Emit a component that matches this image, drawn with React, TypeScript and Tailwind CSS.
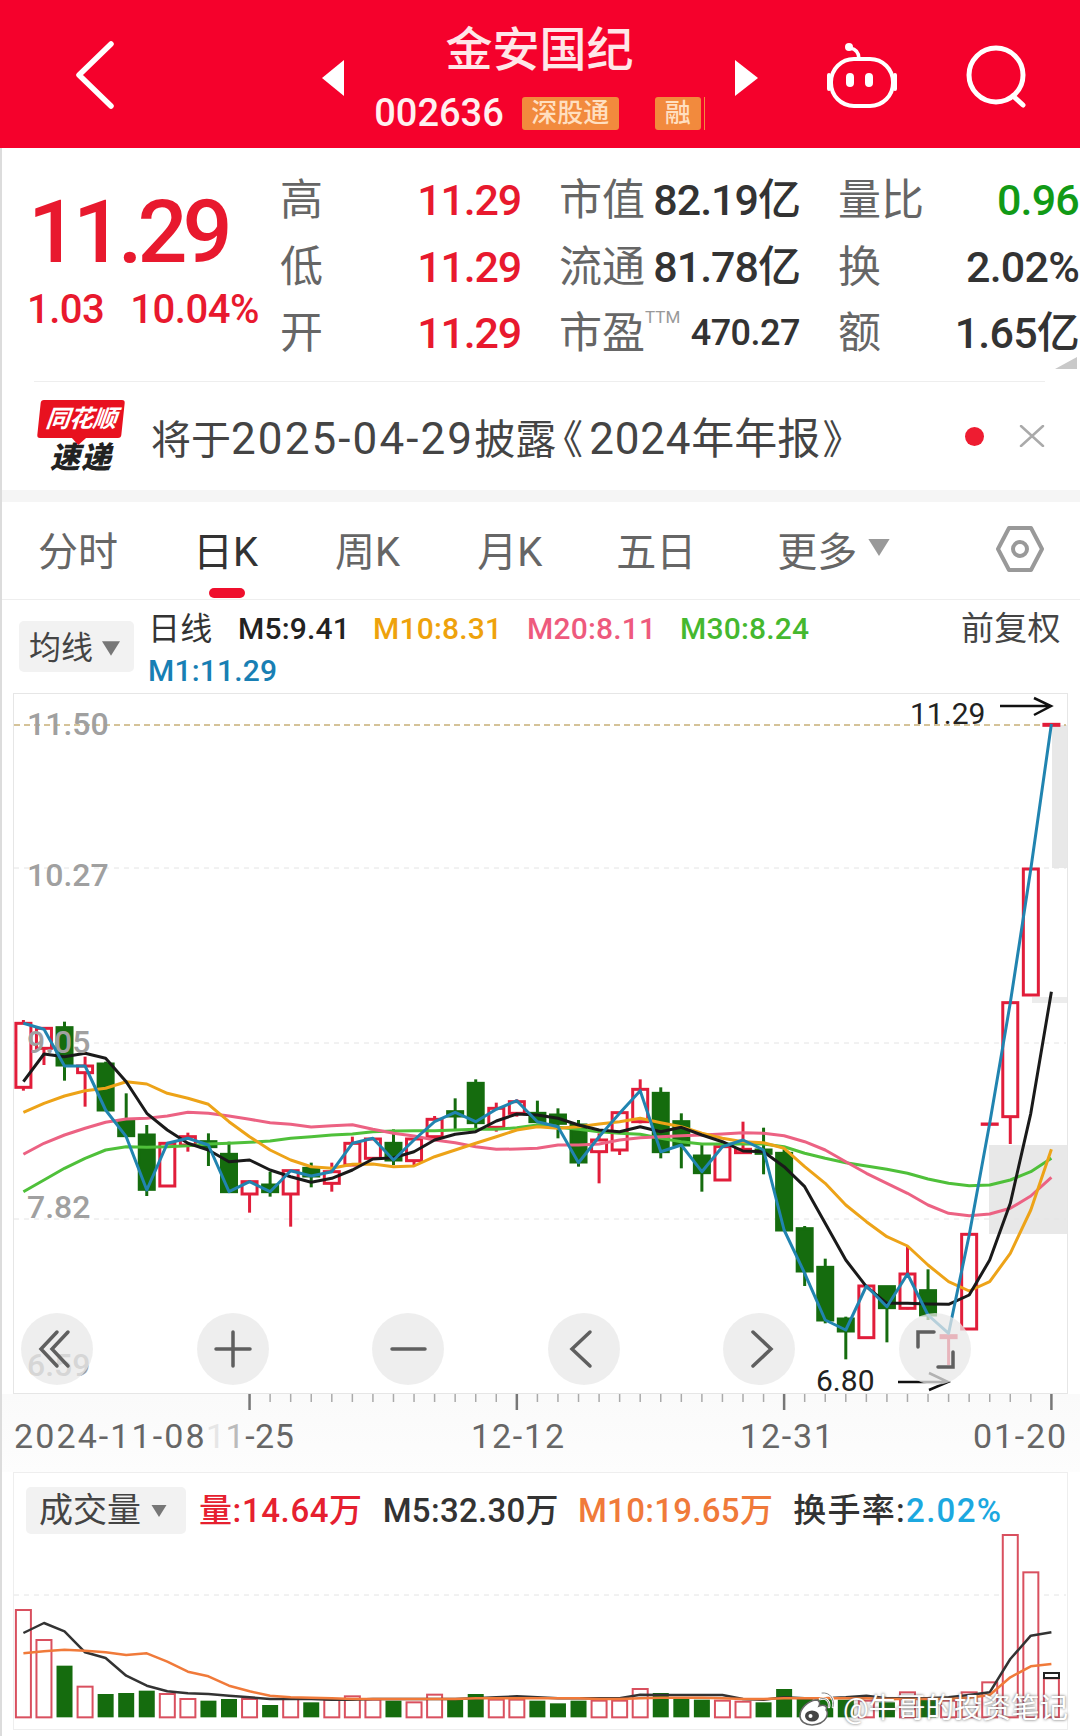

const CJK = "[font-family:Roboto,'Noto_Sans_CJK_SC',sans-serif]";

// zoomed-crop readings: x spacing per bar, y = 990 + v / 3 for the price chart
const barX = (i: number) => 23.4 + 20.56 * i;
const priceY = (v: number) => 990 + v / 3;
const volY = (v: number) => 1470 + v / 3;

type Candle = [number, number, number, number, number];
// up(1)/down(0), body top, body bottom, wick top, wick bottom
const CANDLES: Candle[] = [
  [1, 100, 292, 90, 302], [1, 115, 175, 115, 225], [0, 113, 225, 95, 272], [1, 228, 248, 200, 350],
  [0, 222, 360, 215, 360], [0, 392, 437, 310, 437], [0, 435, 598, 405, 618], [1, 460, 588, 460, 588],
  [1, 440, 465, 428, 485], [0, 455, 470, 430, 528], [0, 493, 605, 455, 605], [1, 575, 612, 570, 668],
  [0, 585, 605, 545, 620], [1, 542, 612, 540, 710], [0, 535, 558, 518, 592], [1, 545, 580, 518, 605],
  [1, 460, 525, 440, 525], [1, 447, 505, 447, 505], [0, 460, 510, 418, 525], [1, 447, 512, 447, 525],
  [1, 388, 440, 378, 450], [0, 365, 378, 325, 420], [0, 280, 398, 268, 415], [1, 355, 412, 338, 425],
  [1, 335, 370, 328, 380], [0, 370, 395, 332, 400],
  [0, 375, 400, 355, 445], [0, 405, 516, 390, 530], [1, 450, 485, 430, 580], [1, 368, 480, 368, 495],
  [1, 298, 395, 268, 400], [0, 310, 485, 292, 505], [0, 395, 465, 370, 535], [0, 498, 548, 465, 605],
  [1, 470, 570, 470, 570], [1, 478, 488, 395, 492], [0, 480, 490, 413, 553], [0, 490, 720, 478, 720],
  [0, 716, 843, 708, 888], [0, 832, 990, 806, 1000], [0, 987, 1023, 980, 1108], [1, 888, 1043, 888, 1043],
  [0, 890, 953, 890, 1057], [1, 852, 955, 770, 958], [0, 902, 975, 838, 990], [1, 1037, 1043, 1035, 1125],
  [1, 733, 1017, 733, 1017], [1, 402, 403, 402, 403], [1, 38, 380, 38, 462], [1, -363, 15, -363, 15],
  [1, -797, -794, -797, -794],
];

const M1 = [100, 118, 228, 228, 360, 440, 600, 460, 445, 465, 605, 575, 605, 542, 558, 545, 460, 445, 510, 450, 395, 367, 395, 358, 332, 395,
  410, 518, 440, 370, 302, 485, 465, 545, 470, 450, 480, 720, 850, 990, 1020, 888, 950, 852, 975, 1030, 735, 400, 38, -363, -798];
const M5 = [275, 192, 200, 190, 205, 275, 370, 420, 460, 480, 515, 510, 540, 560, 577, 565, 540, 507, 503, 485, 450, 433, 425, 393, 372, 375,
  385, 405, 420, 425, 410, 425, 412, 435, 455, 483, 485, 530, 590, 700, 810, 890, 940, 940, 942, 943, 915, 810, 640, 370, 5];
const M10 = [367, 340, 318, 302, 295, 275, 282, 310, 325, 343, 395, 440, 480, 510, 530, 535, 523, 522, 530, 528, 500, 480, 460, 440, 420, 410,
  415, 410, 402, 395, 385, 398, 410, 430, 445, 455, 458, 475, 530, 580, 645, 695, 740, 768, 825, 875, 903, 875, 790, 660, 478];
const M20 = [493, 460, 435, 415, 397, 387, 385, 378, 367, 370, 378, 388, 398, 403, 411, 407, 404, 418, 430, 438, 450, 458, 470, 478, 477, 475,
  465, 465, 462, 450, 443, 440, 437, 435, 432, 428, 430, 437, 455, 480, 515, 550, 580, 610, 645, 670, 677, 672, 655, 618, 562];
const M30 = [605, 570, 535, 505, 480, 470, 472, 470, 467, 462, 460, 457, 453, 445, 440, 435, 432, 425, 423, 422, 422, 420, 418, 418, 413, 405,
  412, 418, 425, 430, 433, 445, 455, 462, 462, 462, 462, 470, 490, 505, 518, 528, 538, 550, 567, 580, 587, 585, 570, 545, 505];

const VOL: [number, number][] = [
  [1, 423], [1, 513], [0, 590], [1, 653], [0, 675], [0, 672], [0, 665], [1, 675], [1, 690], [0, 695], [0, 690], [1, 690], [0, 708],
  [1, 690], [0, 700], [1, 692], [1, 682], [1, 692], [0, 695], [1, 700], [1, 677], [0, 692], [0, 675], [1, 692], [1, 692], [0, 695],
  [0, 703], [0, 695], [1, 695], [1, 695], [1, 660], [0, 672], [0, 690], [0, 692], [1, 695], [1, 698], [0, 700], [0, 660], [0, 690],
  [0, 690], [0, 692], [1, 695], [0, 700], [1, 670], [0, 690], [1, 695], [1, 670], [1, 640], [1, 198], [1, 310], [1, 628],
];
const VOL_M5 = [492, 462, 487, 550, 567, 620, 650, 667, 673, 675, 680, 685, 690, 690, 690, 692, 692, 690, 690, 690, 690, 690, 688, 685, 682, 685,
  688, 688, 688, 688, 677, 678, 678, 678, 678, 690, 692, 685, 688, 688, 685, 680, 688, 688, 688, 685, 678, 670, 570, 500, 490];
const VOL_M10 = [553, 547, 542, 545, 550, 558, 553, 578, 608, 622, 650, 667, 680, 685, 686, 688, 690, 690, 690, 690, 690, 690, 688, 688, 688, 688,
  688, 688, 690, 690, 688, 686, 686, 686, 688, 690, 690, 688, 688, 688, 688, 688, 690, 690, 690, 690, 686, 678, 625, 592, 585];

const toLine = (vals: number[], y: (v: number) => number) => vals.map((v, i) => `${barX(i).toFixed(1)},${y(v).toFixed(1)}`).join(' ');

const RED = '#e11d3a';
const GREEN = '#156c0e';

const Triangle = ({ className }: { className: string }) => (
  <svg viewBox="0 0 10 8" className={className}>
    <path d="M0 0H10L5 8Z" fill="currentColor" />
  </svg>
);

function Header() {
  return (
    <div className="flex h-[148px] bg-[#f5012c] pl-[76px] text-white">
      <svg viewBox="0 0 40 68" className="mt-[41px] h-[68px] w-[40px]" fill="none" stroke="#fff" strokeWidth="5.5" strokeLinecap="round" strokeLinejoin="round">
        <path d="M35 3 3 34 35 65" />
      </svg>
      <svg viewBox="0 0 22 36" className="ml-[206px] mt-[60px] h-[36px] w-[22px]">
        <path d="M22 0V36L0 18Z" fill="#fff" />
      </svg>
      <div className="flex w-[391px] flex-col items-center pt-[24px]">
        <div className="h-[52px] text-[47px] leading-[52px] font-medium text-[#ffe6e8]">金安国纪</div>
        <div className="mt-[20px] flex h-[34px] items-center">
          <span className="text-[38px] leading-none font-medium text-[#fff0f0]">002636</span>
          <span className="ml-[18px] flex h-[33px] w-[97px] items-center justify-center rounded-[3px] bg-[#f28a3d] text-[26px] font-medium text-[#ffdfc0]">深股通</span>
          <span className="ml-[36px] flex h-[33px] w-[46px] items-center justify-center rounded-[3px] bg-[#f28a3d] text-[26px] font-medium text-[#ffdfc0]">融</span>
          <span className="ml-[3px] h-[33px] w-[1px] bg-[#f28a3d]" />
        </div>
      </div>
      <svg viewBox="0 0 23 36" className="mt-[60px] h-[36px] w-[23px]">
        <path d="M0 0V36L23 18Z" fill="#fff" />
      </svg>
      <svg viewBox="0 0 72 68" className="ml-[68px] mt-[40px] h-[68px] w-[72px]" fill="none" stroke="#fff" strokeLinecap="round">
        <circle cx="23" cy="7" r="4" fill="#fff" stroke="none" />
        <path d="M24 8C30 9 33 12 33 19" strokeWidth="3.5" />
        <rect x="5" y="19" width="62" height="47" rx="23" strokeWidth="4" />
        <path d="M3 35V49M69 35V49" strokeWidth="4" />
        <path d="M24 37V43M43 37V43" strokeWidth="8" />
      </svg>
      <svg viewBox="0 0 64 64" className="ml-[66px] mt-[44px] h-[64px] w-[64px]" fill="none" stroke="#fff" strokeWidth="5" strokeLinecap="round">
        <circle cx="32" cy="31" r="27" />
        <path d="M49 52 59 61" />
      </svg>
    </div>
  );
}

const QUOTES = [
  { label: '高', midLabel: '市值', mid: '82.19亿', rightLabel: '量比', right: '0.96', rightColor: 'text-[#119a16]' },
  { label: '低', midLabel: '流通', mid: '81.78亿', rightLabel: '换', right: '2.02%', rightColor: 'text-[#333]' },
  { label: '开', midLabel: '市盈', mid: '470.27', rightLabel: '额', right: '1.65亿', rightColor: 'text-[#333]', ttm: true },
];

function QuotePanel() {
  return (
    <div className="relative flex h-[234px] pt-[19px]">
      <div className="w-[282px] pl-[28px] text-[#e8192e]">
        <div className="mt-[21px] text-[88px] leading-[88px] font-medium tracking-[-5px]">11.29</div>
        <div className="mt-[12px] ml-[-1px] flex text-[40px] leading-[44px] font-medium tracking-[-0.5px]">
          <span>1.03</span>
          <span className="ml-[26px]">10.04%</span>
        </div>
      </div>
      <div className="flex flex-col">
        {QUOTES.map((q) => (
          <div key={q.label} className="flex h-[66.5px] w-[800px] items-center text-[43px] text-[#666]">
            <span className="w-[43px]">{q.label}</span>
            <span className="w-[198px] text-right font-medium tracking-[-1.2px] text-[#e8192e]">11.29</span>
            <div className="ml-[38px] flex w-[241px] items-center justify-between">
              <span className="flex items-start">
                {q.midLabel}
                {q.ttm && <span className="mt-[6px] text-[17px] leading-[20px] text-[#999]">TTM</span>}
              </span>
              <span className={q.ttm ? 'text-[36px] font-medium tracking-[-0.5px] text-[#333]' : 'font-medium tracking-[-1px] text-[#333]'}>{q.mid}</span>
            </div>
            <div className="ml-[38px] flex w-[241px] items-center justify-between">
              <span>{q.rightLabel}</span>
              <span className={`font-medium tracking-[-0.8px] ${q.rightColor}`}>{q.right}</span>
            </div>
          </div>
        ))}
      </div>
      <svg viewBox="0 0 22 12" className="absolute right-[3px] bottom-[13px] h-[12px] w-[22px]">
        <path d="M22 0V12H0Z" fill="#c9c9c9" />
      </svg>
      <div className="absolute right-[35px] bottom-0 left-[34px] h-[1px] bg-[#eeeeee]" />
    </div>
  );
}

function NewsRow() {
  return (
    <div className="flex h-[108px] items-center pl-[38px]">
      <div className="flex w-[86px] flex-col items-center">
        <div className="relative flex h-[38px] w-[84px] skew-x-[-6deg] items-center justify-center rounded-[3px] bg-[#e8111f] text-[24px] leading-none font-bold tracking-[-0.5px] text-white italic">
          同花顺
          <span className="absolute bottom-[-5px] left-[37px] h-[10px] w-[10px] rotate-45 bg-[#e8111f]" />
        </div>
        <div className="mt-[5px] text-[30px] leading-[29px] font-black tracking-[1px] text-[#222] italic">速递</div>
      </div>
      <div className="mt-[6px] ml-[27px] flex items-baseline text-[40px] leading-none whitespace-nowrap text-[#444]">
        将于
        <span className="text-[44px] tracking-[2.1px]">2025-04-29</span>
        <span className="text-[41px]">披露</span>
        <span className="ml-[6px] mr-[7px] [font-feature-settings:'palt']">《</span>
        <span className="text-[44px] tracking-[0.8px]">2024</span>
        <span className="text-[43px]">年年报</span>
        <span className="ml-[3px] [font-feature-settings:'palt']">》</span>
      </div>
      <span className="ml-auto h-[19px] w-[19px] rounded-full bg-[#ee1c31]" />
      <svg viewBox="0 0 26 22" className="mr-[35px] ml-[35px] h-[22px] w-[26px]" fill="none" stroke="#aaa" strokeWidth="2.5" strokeLinecap="round">
        <path d="M2 1 24 21M24 1 2 21" />
      </svg>
    </div>
  );
}

function Tabs() {
  return (
    <div className="relative flex h-[98px] items-center border-b border-[#eeeeee] text-[40px] text-[#666]">
      <span className="mt-[4px] ml-[38px]">分时</span>
      <span className="mt-[4px] ml-[75px] text-[#333]">日K</span>
      <span className="mt-[4px] ml-[77px]">周K</span>
      <span className="mt-[4px] ml-[77px]">月K</span>
      <span className="mt-[4px] ml-[74px]">五日</span>
      <span className="mt-[4px] ml-[81px]">更多</span>
      <Triangle className="mt-[-6px] ml-[11px] h-[17px] w-[22px] text-[#999]" />
      <svg viewBox="0 0 48 48" className="mt-[-3px] ml-[106px] h-[48px] w-[48px]" fill="none" stroke="#999" strokeWidth="4">
        <path d="M13 3H35L46 24 35 45H13L2 24Z" strokeLinejoin="round" />
        <circle cx="24" cy="24" r="7" />
      </svg>
      <span className="absolute bottom-[1px] left-[209px] h-[10px] w-[36px] rounded-full bg-[#ef0f2d]" />
    </div>
  );
}

function Legend() {
  return (
    <div className="flex h-[93px] pl-[19px]">
      <div className="mt-[21px] flex h-[51px] w-[115px] items-center rounded-[5px] bg-[#f2f2f2] pt-[3px] pl-[10px] text-[32px] text-[#444]">
        均线
        <Triangle className="ml-[9px] h-[15px] w-[18px] text-[#777]" />
      </div>
      <div className="ml-[14px] flex w-[913px] flex-wrap content-start pt-[8px] text-[30px] leading-[42px] font-medium tracking-[0.2px]">
        <span className="w-[90px] text-[32px] font-normal text-[#333]">日线</span>
        <span className="w-[135px] text-[#222]">M5:9.41</span>
        <span className="w-[154px] text-[#eea20c]">M10:8.31</span>
        <span className="w-[153px] text-[#ee5a7d]">M20:8.11</span>
        <span className="w-[281px] text-[#45b82f]">M30:8.24</span>
        <span className="w-[100px] text-[33px] font-normal whitespace-nowrap text-[#444]">前复权</span>
        <span className="w-full text-[#187fb4]">M1:11.29</span>
      </div>
    </div>
  );
}

const BUTTON_ICONS = [
  <path key="a" d="M22 5 6 22 22 39M33 5 17 22 33 39" />,
  <path key="b" d="M5 22H39M22 5V39" />,
  <path key="c" d="M6 22H39" />,
  <path key="d" d="M28 5 10 22 28 39" />,
  <path key="e" d="M16 5 34 22 16 39" />,
  <path key="f" d="M5 20V5H21M25 40H40V25" />,
];

function PriceChart() {
  return (
    <div className="relative mr-[12px] ml-[13px] h-[701px] border border-[#e6e6e6]">
      <svg viewBox="14 694 1052 700" className="block h-[700px] w-[1052px] overflow-visible">
        <rect x="1052" y="725" width="15" height="143" fill="#e8e8e8" />
        <rect x="1032" y="997" width="35" height="6" fill="#ececec" />
        <rect x="989" y="1145" width="78" height="89" fill="#e8e8e8" />
        <path d="M14 868H1066M14 1043H1066M14 1219H1066" stroke="#e4e4e4" strokeDasharray="5 5" />
        <path d="M14 725H1066" stroke="#c8b078" strokeWidth="1.5" strokeDasharray="6 4" />
        {CANDLES.map(([up, top, bottom, hi, lo], i) => {
          const x = barX(i);
          const color = up ? RED : GREEN;
          return (
            <g key={i}>
              <path d={`M${x} ${priceY(hi)}V${priceY(lo)}`} stroke={color} strokeWidth="3" />
              <rect
                x={x - 7.5}
                y={priceY(top)}
                width="15"
                height={priceY(bottom) - priceY(top)}
                fill={up ? '#fff' : color}
                stroke={color}
                strokeWidth="3"
              />
            </g>
          );
        })}
        <polyline points={toLine(M30, priceY)} fill="none" stroke="#4fc03a" strokeWidth="3" strokeLinejoin="round" />
        <polyline points={toLine(M20, priceY)} fill="none" stroke="#ec6283" strokeWidth="3" strokeLinejoin="round" />
        <polyline points={toLine(M10, priceY)} fill="none" stroke="#eda318" strokeWidth="3" strokeLinejoin="round" />
        <polyline points={toLine(M5, priceY)} fill="none" stroke="#1a1a1a" strokeWidth="3" strokeLinejoin="round" />
        <polyline points={toLine(M1, priceY)} fill="none" stroke="#2184b0" strokeWidth="3" strokeLinejoin="round" />
        <g fill="#a0a0a0" fontSize="32" fontWeight="500">
          <text x="27" y="735">11.50</text>
          <text x="27" y="886">10.27</text>
          <text x="27" y="1053">9.05</text>
          <text x="27" y="1218">7.82</text>
          <text x="27" y="1376">6.59</text>
        </g>
        <text x="910" y="724" fontSize="30" fill="#222">11.29</text>
        <path d="M1000 706H1050M1034 698 1051 706 1034 715" fill="none" stroke="#111" strokeWidth="2.5" />
        <text x="816" y="1391" fontSize="30" fill="#222">6.80</text>
        <path d="M898 1382H947M929 1373 948 1382 929 1390" fill="none" stroke="#111" strokeWidth="2.5" />
      </svg>
      <div className="absolute top-[619px] left-[7px] flex gap-[103.6px]">
        {BUTTON_ICONS.map((icon, i) => (
          <div key={i} className="flex h-[72px] w-[72px] items-center justify-center rounded-full bg-[#e8e8e8]/75">
            <svg viewBox="0 0 44 44" className="h-[44px] w-[44px]" fill="none" stroke="#5f5f5f" strokeWidth="3.5" strokeLinecap="round">
              {icon}
            </svg>
          </div>
        ))}
      </div>
    </div>
  );
}

function TimeAxis() {
  return (
    <div className="h-[78px] bg-gradient-to-b from-[#fafafa] to-[#fdfdfd]">
      <svg viewBox="0 0 1080 17" className="block h-[17px] w-[1080px]">
        {Array.from({ length: 40 }, (_, k) => k + 11).map((i) => {
          const long = (i - 11) % 13 === 0;
          return <path key={i} d={`M${barX(i)} 0V${long ? 16 : 8}`} stroke={long ? '#777' : '#aaa'} strokeWidth={long ? 2.5 : 1.5} />;
        })}
      </svg>
      <div className="mt-[3px] flex pl-[14px] text-[34px] leading-[44px] tracking-[1.8px] text-[#666]">
        <span className="w-[192px] tracking-[2.1px] whitespace-nowrap">2024-11-08</span>
        <span className="w-[265px] tracking-[0.5px]"><span className="text-[#e6e6e6]">1</span><span className="text-[#bbbbbb]">1</span>-25</span>
        <span className="w-[269px]">12-12</span>
        <span className="w-[233px]">12-31</span>
        <span>01-20</span>
      </div>
    </div>
  );
}

function VolumePanel() {
  return (
    <div className="relative mr-[12px] ml-[13px] h-[258px] border border-[#eeeeee]">
      <div className="flex pt-[14px] pl-[12px] text-[33px] leading-[47px] font-medium">
        <div className="flex h-[47px] w-[160px] items-center rounded-[5px] bg-[#f2f2f2] pl-[13px] text-[34px] font-normal text-[#444]">
          成交量
          <Triangle className="ml-[9px] h-[12px] w-[18px] text-[#777]" />
        </div>
        <span className="ml-[13px] tracking-[0.6px] text-[#e6202f]">量:14.64万</span>
        <span className="ml-[20px] tracking-[0.3px] text-[#333]">M5:32.30万</span>
        <span className="ml-[19px] tracking-[0.3px] text-[#f07a3a]">M10:19.65万</span>
        <span className="ml-[20px] tracking-[1.3px] text-[#333]">换手率:<span className="text-[#1ca8e0]">2.02%</span></span>
      </div>
      <svg viewBox="14 1474 1052 256" className="absolute top-0 left-0 h-[256px] w-[1052px]">
        <path d="M14 1596H1066" stroke="#e4e4e4" strokeDasharray="5 5" />
        {VOL.map(([up, top], i) => {
          const x = barX(i);
          return up ? (
            <rect key={i} x={x - 7.5} y={volY(top)} width="15" height={volY(745) - volY(top)} fill="#fff" stroke="#d9505f" strokeWidth="2" />
          ) : (
            <rect key={i} x={x - 8} y={volY(top)} width="16" height={volY(745) - volY(top)} fill={GREEN} />
          );
        })}
        <rect x="1044" y="1674" width="15" height="5" fill="#fff" stroke="#222" strokeWidth="2" />
        <polyline points={toLine(VOL_M5, volY)} fill="none" stroke="#333" strokeWidth="2.5" strokeLinejoin="round" />
        <polyline points={toLine(VOL_M10, volY)} fill="none" stroke="#f07a3a" strokeWidth="2.5" strokeLinejoin="round" />
      </svg>
    </div>
  );
}

function Watermark() {
  return (
    <div className="absolute top-[1690px] left-[798px] flex h-[38px] items-center text-[28.5px] whitespace-nowrap text-white [text-shadow:0_0_3px_#555]">
      <svg viewBox="0 0 36 34" className="h-[34px] w-[36px]" fill="none">
        <path d="M2 24C2 16 10 9 18 8 22 8 22 12 21 14 26 12 30 14 28 18 31 20 30 32 14 33 7 33 2 29 2 24Z" fill="#fff" stroke="#666" strokeWidth="1.5" />
        <ellipse cx="14" cy="24" rx="7" ry="5.5" fill="#444" />
        <circle cx="12.5" cy="24" r="2" fill="#fff" />
        <path d="M22 7C28 5 32 9 31 15M24 1C32 0 37 7 35 15" stroke="#fff" strokeWidth="2.5" strokeLinecap="round" />
        <path d="M22 7C28 5 32 9 31 15M24 1C32 0 37 7 35 15" stroke="#666" strokeWidth="0.8" strokeLinecap="round" />
      </svg>
      <span className="ml-[9px]">@牛哥的投资笔记</span>
    </div>
  );
}

export default function App() {
  return (
    <div className={`relative h-[1736px] w-[1080px] overflow-hidden bg-white ${CJK}`}>
      <Header />
      <QuotePanel />
      <NewsRow />
      <div className="h-[12px] bg-[#f5f5f5]" />
      <Tabs />
      <Legend />
      <PriceChart />
      <TimeAxis />
      <VolumePanel />
      <div className="absolute top-[148px] bottom-0 left-0 w-[2px] bg-[#dcdcdc]" />
      <Watermark />
    </div>
  );
}
